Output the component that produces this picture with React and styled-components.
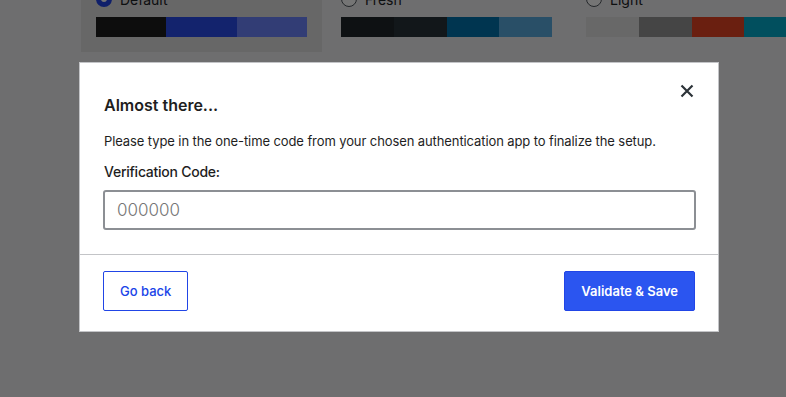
import React from 'react';
import styled, { createGlobalStyle } from 'styled-components';

const GlobalStyle = createGlobalStyle`
  html, body {
    margin: 0;
    padding: 0;
    height: 100%;
    overflow: hidden;
    background: #f0f0f1;
    font-family: Inter, "Liberation Sans", Arial, sans-serif;
    color: #1e1e1e;
  }
`;

const schemes = [
  { name: 'Default', selected: true, colors: ['#1e1e1e', '#2b4eee', '#6e86ff'] },
  { name: 'Fresh', colors: ['#20252b', '#29343a', '#0073af', '#5bade1'] },
  { name: 'Light', colors: ['#e3e3e3', '#979797', '#e74523', '#04adcd'] },
  { name: 'Modern', colors: ['#1e1e1e', '#3858e9', '#33f078'] },
  { name: 'Blue', colors: ['#096484', '#4796b3', '#52accc', '#74b6ce'] },
  { name: 'Midnight', colors: ['#25282b', '#363b3f', '#54b6c3', '#f04945'] },
];

const Page = styled.div`
  margin-top: -21px;
  padding-left: 81px;
  display: grid;
  grid-template-columns: repeat(4, 241px);
  column-gap: 4px;
  row-gap: 2px;
`;

const SchemeCard = styled.div`
  padding: 12px 15px 15px;
  background: ${(p) => (p.$selected ? '#e0e0e0' : 'transparent')};
  display: flex;
  flex-direction: column;
  gap: 10px;
`;

const SchemeLabel = styled.label`
  display: flex;
  align-items: center;
  gap: 8px;
  height: 16px;
  font-size: 14px;
  color: #1d2327;
`;

const Radio = styled.span`
  box-sizing: border-box;
  width: 16px;
  height: 16px;
  border-radius: 50%;
  background: #fff;
  border: ${(p) => (p.$checked ? '5px solid #2145e6' : '1px solid #50575e')};
`;

const Swatches = styled.div`
  display: flex;
  height: 20px;
`;

const Swatch = styled.span`
  flex: 1;
  background: ${(p) => p.$color};
`;

const Overlay = styled.div`
  position: fixed;
  inset: 0;
  background: rgba(0, 0, 0, 0.54);
  display: flex;
  justify-content: center;
  align-items: flex-start;
  padding: 62px 0 0 12px;
`;

const Modal = styled.div`
  position: relative;
  width: 640px;
  box-sizing: border-box;
  background: #fff;
  border: 1px solid #c3c4c7;
`;

const Body = styled.div`
  padding: 31px 24px 24px;
  display: flex;
  flex-direction: column;
`;

const Title = styled.h2`
  margin: 0 0 15px;
  font-size: 16px;
  line-height: 22px;
  font-weight: 600;
  color: #1e1e1e;
`;

const CloseButton = styled.button`
  position: absolute;
  top: 16px;
  right: 19px;
  width: 24px;
  height: 24px;
  padding: 0;
  border: 0;
  background: none;
  color: #2c3338;
  display: flex;
  align-items: center;
  justify-content: center;
  cursor: pointer;
`;

const Text = styled.p`
  margin: 0 0 11px;
  font-size: 13px;
  line-height: 20px;
  letter-spacing: -0.1px;
  color: #1e1e1e;
`;

const FieldLabel = styled.label`
  font-size: 14px;
  line-height: 20px;
  font-weight: 500;
  letter-spacing: -0.25px;
  color: #1e1e1e;
  margin-bottom: 8px;
`;

const CodeInput = styled.input`
  box-sizing: border-box;
  width: calc(100% + 3px);
  height: 40px;
  margin-left: -1px;
  padding: 0 12px;
  border: 2px solid #8c8f94;
  border-radius: 3px;
  font-family: Inter, "Liberation Sans", Arial, sans-serif;
  font-size: 17px;
  font-weight: 300;
  color: #1e1e1e;
  caret-color: #000;
  outline: none;
  &::placeholder {
    color: #757575;
  }
`;

const Footer = styled.div`
  border-top: 1px solid #c3c4c7;
  padding: 16px 23px 20px 23px;
  display: flex;
  justify-content: space-between;
`;

const Button = styled.button`
  height: 40px;
  padding: 0 16px;
  border-radius: 2px;
  font-family: Inter, "Liberation Sans", Arial, sans-serif;
  font-size: 13px;
  font-weight: ${(p) => (p.$primary ? 600 : 500)};
  cursor: pointer;
  border: 1px solid #2145e6;
  background: ${(p) => (p.$primary ? '#2b55f0' : '#fff')};
  color: ${(p) => (p.$primary ? '#fff' : '#1a44e8')};
`;

const CloseIcon = () => (
  <svg width="24" height="24" viewBox="0 0 24 24" fill="none">
    <path d="M6.5 6.5l11 11M17.5 6.5l-11 11" stroke="currentColor" strokeWidth="2.2" />
  </svg>
);

export default function App() {
  return (
    <>
      <GlobalStyle />
      <Page>
        {schemes.map((s) => (
          <SchemeCard key={s.name} $selected={s.selected}>
            <SchemeLabel>
              <Radio $checked={s.selected} />
              {s.name}
            </SchemeLabel>
            <Swatches>
              {s.colors.map((c, i) => (
                <Swatch key={i} $color={c} />
              ))}
            </Swatches>
          </SchemeCard>
        ))}
      </Page>
      <Overlay>
        <Modal>
          <CloseButton aria-label="Close">
            <CloseIcon />
          </CloseButton>
          <Body>
            <Title>Almost there...</Title>
            <Text>
              Please type in the one-time code from your chosen authentication app to finalize the setup.
            </Text>
            <FieldLabel htmlFor="code">Verification Code:</FieldLabel>
            <CodeInput id="code" placeholder="000000" autoFocus />
          </Body>
          <Footer>
            <Button>Go back</Button>
            <Button $primary>Validate &amp; Save</Button>
          </Footer>
        </Modal>
      </Overlay>
    </>
  );
}
